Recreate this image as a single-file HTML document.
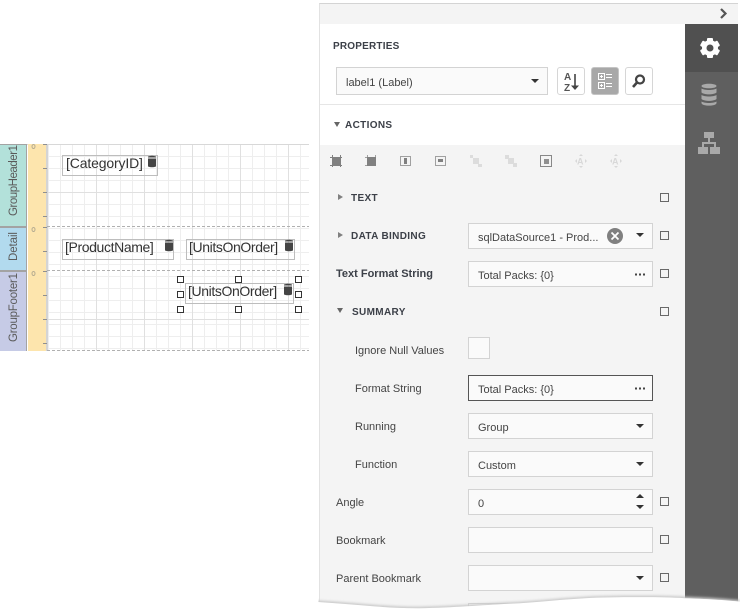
<!DOCTYPE html>
<html><head><meta charset="utf-8">
<style>
html,body{margin:0;padding:0;background:#fff;width:740px;height:613px;overflow:hidden}
body{position:relative;font-family:"Liberation Sans",sans-serif;color:#404040}
.a{position:absolute}
.t{position:absolute;white-space:nowrap;font-size:11px;line-height:14px;color:#444}
.h{position:absolute;white-space:nowrap;font-size:10px;line-height:12px;font-weight:bold;letter-spacing:.35px;color:#3c4048}
.f{position:absolute;left:468px;width:183px;height:24px;border:1px solid #d3d3d3;background:#fafafa;box-sizing:content-box}
.f span{position:absolute;left:9px;top:7px;font-size:11px;line-height:14px;color:#444;white-space:nowrap}
.c{position:absolute;left:660px;width:7px;height:7px;border:1.5px solid #686868}
.arr{position:absolute;width:0;height:0;border-left:4px solid transparent;border-right:4px solid transparent;border-top:4px solid #333}
.dots{position:absolute;width:14px;height:3px;left:166px;top:11px}
.l{position:absolute;border:1px solid #bdbdbd;height:19px;box-sizing:content-box}
.l b{position:absolute;font-weight:normal;font-size:14px;line-height:16px;top:-1px;color:#333;white-space:nowrap;letter-spacing:-.38px}
.hd{position:absolute;width:5px;height:5px;border:1px solid #333;background:#fff}
.btn{position:absolute;top:67px;width:26px;height:26px;border:1px solid #d6d6d6;border-radius:3px;background:#fff}
</style></head><body>

<svg class="a" style="left:0;top:140px" width="320" height="220" xmlns="http://www.w3.org/2000/svg" shape-rendering="crispEdges">
<defs>
<pattern id="g1" x="48" y="4" width="12" height="12" patternUnits="userSpaceOnUse"><path d="M.5 0V12M0 .5H12" stroke="#eeeeee" fill="none"/></pattern>
</defs>
<rect x="47" y="4" width="262" height="207" fill="url(#g1)"/>
<path d="M96.500 4V211M144.500 4V211M192.500 4V211M240.500 4V211M288.500 4V211M47 52.500H309M47 179.500H309" stroke="#e0e0e0" fill="none"/>
<path d="M0 4.500H309" stroke="#d8d8d8"/>
<rect x="0" y="4" width="27" height="83" fill="#b3e1da"/>
<rect x="0" y="87" width="27" height="44" fill="#b2daee"/>
<rect x="0" y="131" width="27" height="80" fill="#c6cbe6"/>
<path d="M26.500 4V211M0 4.500H27M0 86.500H27M0 87.500H27M0 130.500H27M0 131.500H27" stroke="#a3a3a3" fill="none"/>
<rect x="28" y="4" width="18" height="207" fill="#fde5ad"/>
<path d="M46.500 4V211M47.500 4V211" stroke="#d4d4d4"/>
<path d="M43 28.500H47M43 52.500H47M43 76.500H47M43 4.500H47M43 87.500H47M43 111.500H47M43 131.500H47M43 155.500H47M43 179.500H47M43 203.500H47" stroke="#8f8f8f"/>
<path d="M47 86.500H309M47 130.500H309M47 210.500H309" stroke="#b0b0b0" stroke-dasharray="3 2"/>
<ellipse cx="33.500" cy="6.500" rx="1.500" ry="2" fill="none" stroke="#b5ab90" shape-rendering="auto"/>
<ellipse cx="33.500" cy="89.500" rx="1.500" ry="2" fill="none" stroke="#b5ab90" shape-rendering="auto"/>
<ellipse cx="33.500" cy="133.500" rx="1.500" ry="2" fill="none" stroke="#b5ab90" shape-rendering="auto"/>
<g font-family="Liberation Sans" font-size="11.500" fill="#5a5a5a" shape-rendering="auto">
<text transform="translate(17 76) rotate(-90)" textLength="71">GroupHeader1</text>
<text transform="translate(17 121) rotate(-90)" textLength="29">Detail</text>
<text transform="translate(17 202) rotate(-90)" textLength="69">GroupFooter1</text>
</g>
</svg>

<div class="l" style="left:62px;top:155px;width:94px"><b style="left:3px;letter-spacing:-.15px">[CategoryID]</b></div>
<div class="l" style="left:62px;top:239px;width:110px"><b style="left:2px">[ProductName]</b></div>
<div class="l" style="left:186px;top:239px;width:107px"><b style="left:2px">[UnitsOnOrder]</b></div>
<div class="l" style="left:185px;top:283px;width:107px"><b style="left:2px">[UnitsOnOrder]</b></div>
<svg class="a" style="left:0;top:0" width="320" height="320">
<g fill="#444">
<path d="M148 156.500q4-1.500 8 0v1h-8zM148 158.500h8v8q-4 1.500-8 0z"/>
<path d="M165 240.500q4-1.500 8 0v1h-8zM165 242.500h8v8q-4 1.500-8 0z"/>
<path d="M285 240.500q4-1.500 8 0v1h-8zM285 242.500h8v8q-4 1.500-8 0z"/>
<path d="M284 284.500q4-1.500 8 0v1h-8zM284 286.500h8v8q-4 1.500-8 0z"/>
</g></svg>
<div class="hd" style="left:177px;top:276px"></div><div class="hd" style="left:235px;top:276px"></div><div class="hd" style="left:295px;top:276px"></div>
<div class="hd" style="left:177px;top:291px"></div><div class="hd" style="left:295px;top:291px"></div>
<div class="hd" style="left:177px;top:306px"></div><div class="hd" style="left:235px;top:306px"></div><div class="hd" style="left:295px;top:306px"></div>

<!-- Panel -->
<div class="a" style="left:319px;top:3px;width:419px;height:610px;background:#f4f4f4;border-top:1px solid #d4d4d4;border-left:1px solid #e2e2e2;box-sizing:border-box"></div>
<div class="a" style="left:320px;top:24px;width:365px;height:121px;background:#fff"></div>
<div class="a" style="left:320px;top:104px;width:365px;height:1px;background:#e6e6e6"></div>
<div class="a" style="left:685px;top:24px;width:53px;height:589px;background:#5f5f5f"></div>
<div class="a" style="left:685px;top:24px;width:53px;height:48px;background:#505050"></div>

<svg class="a" style="left:718px;top:7px" width="12" height="14"><path d="M3 2l4.500 4.500L3 11" fill="none" stroke="#555" stroke-width="2.200"/></svg>

<!-- side icons -->
<svg class="a" style="left:685px;top:24px" width="53" height="140">
<g fill="#fff">
<circle cx="25" cy="24" r="8"/>
<rect x="22" y="14" width="6" height="20" rx="1"/>
<rect x="22" y="14" width="6" height="20" rx="1" transform="rotate(60 25 24)"/>
<rect x="22" y="14" width="6" height="20" rx="1" transform="rotate(120 25 24)"/>
</g>
<circle cx="25" cy="24" r="3.500" fill="#505050"/>
<g fill="#a9a9a9">
<path d="M16.500 62c0-3 15-3 15 0s-15 3-15 0z"/>
<path d="M16.500 64.500c3 2 12 2 15 0v4c-3 2.500-12 2.500-15 0z"/>
<path d="M16.500 71c3 2 12 2 15 0v4c-3 2.500-12 2.500-15 0z"/>
<path d="M16.500 77.500c3 2 12 2 15 0v1.500c0 3.500-15 3.500-15 0z"/>
</g>
<g fill="#a9a9a9" shape-rendering="crispEdges">
<rect x="19" y="108" width="10" height="6"/>
<rect x="13" y="123" width="10" height="7"/>
<rect x="25" y="123" width="10" height="7"/>
<path d="M23 114h2v4h6v5h-2v-3H19v3h-2v-5h6z"/>
</g>
</svg>

<div class="h" style="left:333px;top:41px;letter-spacing:.2px">PROPERTIES</div>
<div class="a" style="left:336px;top:67px;width:210px;height:26px;border:1px solid #d3d3d3;background:#fafafa"></div>
<div class="t" style="left:346px;top:76px">label1 (Label)</div>
<div class="arr" style="left:531px;top:79px"></div>

<div class="btn" style="left:557px"></div>
<div class="btn" style="left:591px;background:#a8a8a8;border-color:#c4c4c4"></div>
<div class="btn" style="left:625px"></div>
<svg class="a" style="left:557px;top:67px" width="100" height="28">
<text x="7" y="13" font-family="Liberation Sans" font-size="10" font-weight="bold" fill="#555">A</text>
<text x="7" y="24" font-family="Liberation Sans" font-size="10" font-weight="bold" fill="#555">Z</text>
<path d="M18 7V21" stroke="#444" stroke-width="1.600"/><path d="M14 18.500h8L18 23z" fill="#444"/>
<g fill="none" stroke="#fff" shape-rendering="crispEdges">
<rect x="41.500" y="6.500" width="6" height="6"/><rect x="41.500" y="15.500" width="6" height="6"/>
<path d="M43 9.500h3M44.500 8v3M43 18.500h3M44.500 17v3M49 7.500h6M49 10.500h6M49 16.500h6M49 19.500h6"/>
</g>
<circle cx="83" cy="12.500" r="4" fill="none" stroke="#444" stroke-width="2.200"/>
<path d="M80 15.500L76 20" stroke="#444" stroke-width="2.600"/>
</svg>

<div class="a" style="left:334px;top:122px;width:0;height:0;border-left:3px solid transparent;border-right:3px solid transparent;border-top:5px solid #666"></div>
<div class="h" style="left:345px;top:120px;letter-spacing:.35px">ACTIONS</div>

<!-- actions toolbar -->
<svg class="a" style="left:325px;top:145px" width="310" height="30" shape-rendering="crispEdges">
<g stroke="#808080" fill="none">
<path d="M5 12.500H17M5 20.500H17M7.500 10V22M15.500 10V22"/>
<rect x="8" y="13" width="7" height="7" fill="#808080" stroke="none"/>
<path d="M40 12.500H52M40 20.500H52M42.500 10V22M50.500 10V22" stroke-dasharray="2 1" stroke="#a0a0a0"/>
<rect x="42" y="12" width="9" height="9" fill="#808080" stroke="none"/>
</g>
<g stroke="#a0a0a0" fill="none">
<rect x="75.500" y="11.500" width="10" height="9"/><rect x="79" y="13" width="3" height="6" fill="#808080" stroke="none"/>
<rect x="110.500" y="11.500" width="10" height="9"/><rect x="113" y="14" width="5" height="3" fill="#808080" stroke="none"/>
</g>
<g fill="#dcdcdc">
<rect x="145" y="10" width="3" height="3"/><rect x="148" y="13" width="6" height="6"/><rect x="153" y="19" width="4" height="3"/>
<rect x="180" y="10" width="4" height="4"/><rect x="183" y="13" width="6" height="6"/><rect x="188" y="18" width="4" height="4"/>
</g>
<rect x="215.500" y="10.500" width="11" height="11" fill="none" stroke="#888"/><rect x="219" y="14" width="5" height="5" fill="#909090"/>
<g font-family="Liberation Sans" font-size="9" font-weight="bold" fill="#d8d8d8" shape-rendering="auto">
<text x="252" y="19.500">A</text><text x="287" y="19.500">A</text>
<path d="M250 16l2-2v4zM262 16l-2-2v4zM256 9l-2 2h4zM256 23l-2-2h4zM285 16l2-2v4zM297 16l-2-2v4zM291 9l-2 2h4zM291 23l-2-2h4z"/>
</g>
</svg>

<!-- rows -->
<div class="a" style="left:338px;top:194px;width:0;height:0;border-top:3.500px solid transparent;border-bottom:3.500px solid transparent;border-left:5px solid #808080"></div>
<div class="h" style="left:351px;top:193px">TEXT</div>
<div class="c" style="top:193px"></div>

<div class="a" style="left:338px;top:232px;width:0;height:0;border-top:3.500px solid transparent;border-bottom:3.500px solid transparent;border-left:5px solid #808080"></div>
<div class="h" style="left:351px;top:231px">DATA BINDING</div>
<div class="f" style="top:223px"><span>sqlDataSource1 - Prod...</span>
<svg class="a" style="left:138px;top:4px" width="16" height="16"><circle cx="8" cy="8" r="8" fill="#808080"/><path d="M4.500 4.500l7 7M11.500 4.500l-7 7" stroke="#fff" stroke-width="1.800"/></svg>
<i class="arr" style="left:167px;top:9px"></i></div>
<div class="c" style="top:231px"></div>

<div class="t" style="left:336px;top:267px;font-weight:bold;color:#3c4048">Text Format String</div>
<div class="f" style="top:261px"><span>Total Packs: {0}</span><svg class="dots"><path d="M0 1.500h2M4 1.500h2M8 1.500h2" stroke="#444" stroke-width="2"/></svg></div>
<div class="c" style="top:269px"></div>

<div class="a" style="left:337px;top:308px;width:0;height:0;border-left:3px solid transparent;border-right:3px solid transparent;border-top:5px solid #666"></div>
<div class="h" style="left:352px;top:307px">SUMMARY</div>
<div class="c" style="top:307px"></div>

<div class="t" style="left:355px;top:344px">Ignore Null Values</div>
<div class="a" style="left:468px;top:337px;width:20px;height:20px;border:1px solid #d3d3d3;background:#fafafa"></div>

<div class="t" style="left:355px;top:382px">Format String</div>
<div class="f" style="top:375px;border-color:#555"><span>Total Packs: {0}</span><svg class="dots"><path d="M0 1.500h2M4 1.500h2M8 1.500h2" stroke="#444" stroke-width="2"/></svg></div>

<div class="t" style="left:355px;top:420px">Running</div>
<div class="f" style="top:413px"><span>Group</span><i class="arr" style="left:167px;top:10px"></i></div>

<div class="t" style="left:355px;top:458px">Function</div>
<div class="f" style="top:451px"><span>Custom</span><i class="arr" style="left:167px;top:10px"></i></div>

<div class="t" style="left:336px;top:496px">Angle</div>
<div class="f" style="top:489px"><span>0</span>
<i class="arr" style="left:167px;top:4px;border-top:0;border-bottom:4px solid #333"></i>
<i class="arr" style="left:167px;top:15px"></i></div>
<div class="c" style="top:497px"></div>

<div class="t" style="left:336px;top:534px">Bookmark</div>
<div class="f" style="top:527px"></div>
<div class="c" style="top:535px"></div>

<div class="t" style="left:336px;top:572px">Parent Bookmark</div>
<div class="f" style="top:565px"><i class="arr" style="left:167px;top:10px"></i></div>
<div class="c" style="top:573px"></div>
<div class="f" style="top:603px"></div>

<!-- torn edge -->
<svg class="a" style="left:318px;top:585px" width="422" height="28">
<defs><filter id="s" x="-5%" y="-50%" width="110%" height="200%"><feGaussianBlur stdDeviation="1.200"/></filter></defs>
<path d="M0 15.500C40 18 70 22 102 21.700C140 21 170 18 202 16.700C240 14 260 11 300 10.700C330 10.500 350 10.500 367 11.700C395 12.500 410 14 422 15V28H0z" fill="#c8c8c8" filter="url(#s)"/>
<path d="M0 17C40 19.500 70 23.500 102 23.200C140 22.500 170 19.500 202 18.200C240 15.500 260 12.500 300 12.200C330 12 350 12 367 13.200C395 14 410 15.500 422 16.500V28H0z" fill="#fff"/>
</svg>
</body></html>
